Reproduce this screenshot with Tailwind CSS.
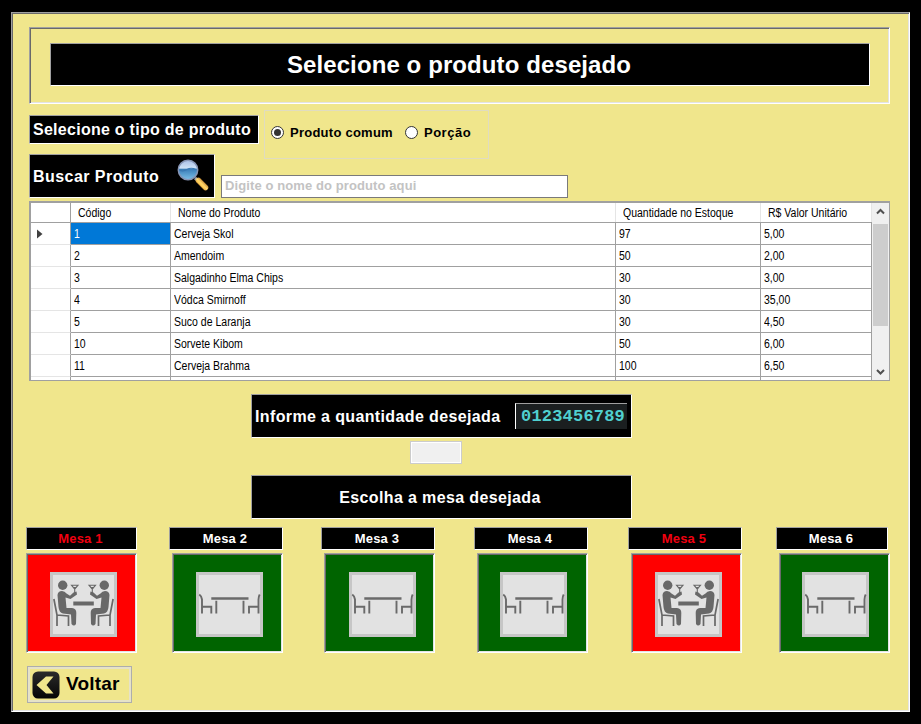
<!DOCTYPE html>
<html lang="pt-BR">
<head>
<meta charset="utf-8">
<title>Selecione o produto desejado</title>
<script src="https://cdn.jsdelivr.net/npm/@tailwindcss/browser@4"></script>
</head>
<body class="w-[921px] h-[724px] overflow-hidden bg-black pl-[11px] pt-3 font-['Liberation_Sans',sans-serif] text-black">

<!-- Shared pictograms -->
<svg class="hidden">
  <symbol id="occupied" viewBox="0 0 67 65">
    <rect width="67" height="65" fill="#c6c6c6"/><rect x="3" y="3" width="61" height="59" fill="#e2e2e2"/>
    <g id="diner" fill="none" stroke="#686868">
      <circle cx="12.700" cy="13.300" r="4.700" fill="#686868" stroke="none"/>
      <path d="M7.500 23Q8 19 12 19Q14.800 19 16.500 21.500L20 23.800L23.500 20.500L26.500 19.500L27 22.500L20.500 27L15.500 25.500L16.500 36H22Q26.500 36.500 26.300 41L26 52Q24 55 21.500 52L21 42.500L13 41.500Q9 40.500 8.500 35Z" fill="#686868" stroke="none"/>
      <path d="M3.900 27L7 43V54M7 43L18.500 44V54" stroke-width="1.700"/>
      <path d="M21.500 13.200H28L24.700 17.200ZM24.700 17V21" stroke-width="1.100"/>
      <path d="M23 15H26.500L24.700 17Z" fill="#686868" stroke="none"/>
    </g>
    <use href="#diner" transform="translate(67 0) scale(-1 1)"/>
    <rect x="23.300" y="29.500" width="20.500" height="4" fill="#686868"/>
  </symbol>
  <symbol id="free" viewBox="0 0 67 65">
    <rect width="67" height="65" fill="#c6c6c6"/><rect x="3" y="3" width="61" height="59" fill="#e2e2e2"/>
    <g fill="none" stroke="#6a6a6a" stroke-width="1.900">
      <path d="M15.300 26.500H52.500" stroke-width="2.600"/>
      <path d="M20.300 28.800V41.500M47.500 28.800V41.500"/>
      <path d="M3.300 22.500Q5.500 24 6 27.500V41.500M6 34.800H15.300V41.500"/>
      <path d="M63.700 22.500Q62.700 24 62.500 27.500V41.500M62.500 34.800H53V41.500"/>
    </g>
  </symbol>
</svg>

<main class="w-[899px] h-[700px] border border-t-[#a0a0a0] border-l-[#a0a0a0] border-r-white border-b-white shadow-[inset_1px_1px_0_#696969,inset_-1px_-1px_0_#e3e3e3] bg-[#f0e68c] pt-[14px] pl-[17px]">

  <header class="w-[861px] h-[77px] border border-t-[#a0a0a0] border-l-[#a0a0a0] border-r-white border-b-white shadow-[inset_1px_1px_0_#696969,inset_-1px_-1px_0_#e3e3e3] pt-[15px] pl-5">
    <h1 class="w-[820px] h-[43px] flex items-center justify-center bg-black border border-t-[#a0a0a0] border-l-[#a0a0a0] border-r-white border-b-white text-white font-bold text-[24px] pr-[2px] tracking-[0.1px]">Selecione o produto desejado</h1>
  </header>

  <section class="flex h-[50px] pt-[6px]">
    <div class="mt-[5px] w-[230px] h-[29px] flex items-center pl-[3px] bg-black border border-t-[#a0a0a0] border-l-[#a0a0a0] border-r-white border-b-white text-white font-bold text-[16px] tracking-[0.27px] whitespace-nowrap">Selecione o tipo de produto</div>
    <div class="ml-[5px] w-[225px] h-[49px] shrink-0 border border-[#e0dcc0] flex items-start pt-[15px] pl-[6px] font-bold text-[13px] leading-[14px] tracking-[0.25px]">
      <svg class="w-[14px] h-[14px]" viewBox="0 0 14 14"><circle cx="6.500" cy="6.500" r="6" fill="#fff" stroke="#333"/><circle cx="6.500" cy="6.500" r="3.500" fill="#333"/></svg>
      <span class="ml-[5px] w-[115px]">Produto comum</span>
      <svg class="w-[14px] h-[14px]" viewBox="0 0 14 14"><circle cx="6.500" cy="6.500" r="6" fill="#fff" stroke="#333"/></svg>
      <span class="ml-[5px] tracking-[0.5px]">Porção</span>
    </div>
  </section>

  <section class="flex h-[47px]">
    <div class="w-[186px] h-[44px] flex items-center pl-[3px] bg-black border border-t-[#a0a0a0] border-l-[#a0a0a0] border-r-white border-b-white text-white font-bold text-[16px] tracking-[0.45px]">
      <span class="w-[143px] pt-px">Buscar Produto</span>
      <svg class="w-[34px] h-[34px] -mt-[1px]" viewBox="0 0 34 34">
        <defs>
          <linearGradient id="lens" x1="0" y1="0" x2="0" y2="1"><stop offset="0" stop-color="#a9bfe6"/><stop offset=".4" stop-color="#cfe2f6"/><stop offset=".47" stop-color="#3c7fb8"/><stop offset="1" stop-color="#7cc0e8"/></linearGradient>
          <linearGradient id="grip" x1="0" y1="1" x2="1" y2="0"><stop offset="0" stop-color="#c87a10"/><stop offset=".5" stop-color="#ffd873"/><stop offset="1" stop-color="#a85c08"/></linearGradient>
        </defs>
        <path d="M19 19L23 22.500" stroke="#9aa0a8" stroke-width="3"/>
        <path d="M22.500 21.500L29.500 28.500" stroke="url(#grip)" stroke-width="5.500" stroke-linecap="round"/>
        <path d="M22 22L28.500 28.500" stroke="#ffd15c" stroke-width="1.800" stroke-linecap="round"/>
        <circle cx="12" cy="11" r="9.700" fill="url(#lens)" stroke="#8795b5" stroke-width="1.500"/>
        <path d="M3.500 11Q7 13 11 10.500T20 10.500" fill="none" stroke="#3a78b2" stroke-width="1.200"/>
      </svg>
    </div>
    <div class="ml-[6px] mt-[21px] w-[347px] h-[23px] bg-white border border-[#7a7a7a] pl-[3px] flex items-center pb-[2px] text-[#c3c3c3] font-bold text-[13px] tracking-[0.1px]">Digite o nome do produto aqui</div>
  </section>

  <section class="w-[861px] h-[180px] border border-[#a0a0a0] shadow-[inset_1px_1px_0_#a0a0a0] flex pl-px pt-px bg-white text-[12px]">
    <div id="grid" class="w-[841px] h-[177px] overflow-hidden"></div>
    <div class="w-[17px] h-[177px] bg-[#f0f0f0] flex flex-col items-center">
      <svg class="w-[17px] h-[21px] shrink-0" viewBox="0 0 17 21"><path d="M5 10.500L8.500 7L12 10.500" fill="none" stroke="#505050" stroke-width="2"/></svg>
      <div class="w-[15px] h-[102px] shrink-0 bg-[#cdcdcd]"></div>
      <svg class="w-[17px] h-[17px] mt-auto shrink-0" viewBox="0 0 17 17"><path d="M5 7L8.500 10.500L12 7" fill="none" stroke="#505050" stroke-width="2"/></svg>
    </div>
  </section>

  <section class="ml-[222px] mt-[13px] w-[381px] h-[125px] text-white font-bold text-[16px] tracking-[0.37px]">
    <div class="h-[44px] flex items-center pl-[3px] bg-black border border-t-[#a0a0a0] border-l-[#a0a0a0] border-r-white border-b-white">
      <span class="w-[260px] pt-[2px] whitespace-nowrap">Informe a quantidade desejada</span>
      <div class="w-[112px] h-[26px] bg-[#1b1f20] border-t border-l border-t-[#a0a0a0] border-l-white flex items-center pl-[5px] pt-px font-['Liberation_Mono',monospace] font-bold text-[17px] tracking-[0.2px] text-[#50d0d0]">0123456789</div>
    </div>
    <div class="ml-[159px] mt-[3px] w-[52px] h-[23px] bg-[#f0f0f0] border border-[#cccccc] shadow-[inset_0_0_0_1px_#fff]"></div>
    <div class="mt-[11px] h-[44px] flex items-center justify-center bg-black border border-t-[#a0a0a0] border-l-[#a0a0a0] border-r-white border-b-white pr-[3px] pt-[2px]">Escolha a mesa desejada</div>
  </section>

  <section id="tables" class="-ml-[3px] mt-[8px] flex h-[126px]"></section>

  <button class="-ml-[2px] mt-[13px] w-[105px] h-[37px] border border-[#adadad] shadow-[inset_0_0_0_2px_#e6e2c8] flex items-center pl-1 font-bold text-[19px] tracking-[0.2px]">
    <svg class="w-[28px] h-[28px]" viewBox="0 0 28 28">
      <defs><linearGradient id="back" x1="0" y1="0" x2="0" y2="1"><stop offset="0" stop-color="#2b2b2b"/><stop offset="1" stop-color="#050505"/></linearGradient></defs>
      <rect x=".5" y=".5" width="27" height="27" rx="5.500" fill="url(#back)"/>
      <path d="M4.500 14L14 5.500H21.500L14.500 14L21.500 22.500H14Z" fill="#f0e68c"/>
    </svg>
    <span class="ml-[6px]">Voltar</span>
  </button>
</main>

<script>
const products = [
  ['1', 'Cerveja Skol', '97', '5,00'],
  ['2', 'Amendoim', '50', '2,00'],
  ['3', 'Salgadinho Elma Chips', '30', '3,00'],
  ['4', 'Vódca Smirnoff', '30', '35,00'],
  ['5', 'Suco de Laranja', '30', '4,50'],
  ['10', 'Sorvete Kibom', '50', '6,00'],
  ['11', 'Cerveja Brahma', '100', '6,50'],
  ['', '', '', '']
];
const widths = [100, 445, 145, 111];
const heads = ['Código', 'Nome do Produto', 'Quantidade no Estoque', 'R$ Valor Unitário'];
const label = t => `<span class="inline-block origin-left scale-x-[0.875] whitespace-nowrap">${t}</span>`;
document.getElementById('grid').innerHTML =
  `<div class="flex h-5 border-b border-[#a0a0a0]"><div class="w-[40px] shrink-0 border-r border-[#a0a0a0]"></div>` +
  heads.map((h, i) => `<div class="shrink-0 border-r border-[#e5e5e5] pl-[7px] flex items-center" style="width:${widths[i]}px">${label(h)}</div>`).join('') + '</div>' +
  products.map((p, r) => `<div class="flex h-[22px]">
    <div class="w-[40px] shrink-0 border-r border-r-[#a0a0a0] border-b border-b-[#e5e5e5] flex items-center pl-[6px]">${r === 0 ? '<svg class="w-[6px] h-[10px] mt-px" viewBox="0 0 6 10"><path d="M0 0.500L5.500 5L0 9.500Z" fill="#404040"/></svg>' : ''}</div>` +
    p.map((c, i) => `<div class="shrink-0 border-r border-b border-[#a0a0a0] pl-[3px] flex items-center ${r === 0 && i === 0 ? 'bg-[#0078d7] text-white' : ''}" style="width:${widths[i]}px">${label(c)}</div>`).join('') + '</div>').join('');

const mesas = [
  { col: 143, label: 111, shift: 0, icon: 24, busy: true },
  { col: 152, label: 114, shift: 3, icon: 24, busy: false },
  { col: 153, label: 114, shift: 3, icon: 25, busy: false },
  { col: 154, label: 114, shift: 3, icon: 23, busy: false },
  { col: 148, label: 114, shift: 3, icon: 24, busy: true },
  { col: 114, label: 112, shift: 3, icon: 23, busy: false }
];
document.getElementById('tables').innerHTML = mesas.map((m, i) => `
  <div class="shrink-0" style="width:${m.col}px">
    <div class="h-[23px] flex items-center justify-center pr-[2px] bg-black border border-t-[#a0a0a0] border-l-[#a0a0a0] border-r-white border-b-white font-bold text-[13px] tracking-[0.2px] ${m.busy ? 'text-[#f00010]' : 'text-white'}" style="width:${m.label}px">Mesa ${i + 1}</div>
    <div class="mt-[3px] w-[111px] h-[100px] border border-t-[#a0a0a0] border-l-[#a0a0a0] border-r-white border-b-white shadow-[inset_1px_1px_0_#696969,inset_-1px_-1px_0_#e3e3e3] pt-[18px] ${m.busy ? 'bg-[#ff0000]' : 'bg-[#006400]'}" style="margin-left:${m.shift}px;padding-left:${m.icon - 1}px">
      <svg class="w-[67px] h-[65px]"><use href="${m.busy ? '#occupied' : '#free'}"/></svg>
    </div>
  </div>`).join('');
</script>
</body>
</html>
